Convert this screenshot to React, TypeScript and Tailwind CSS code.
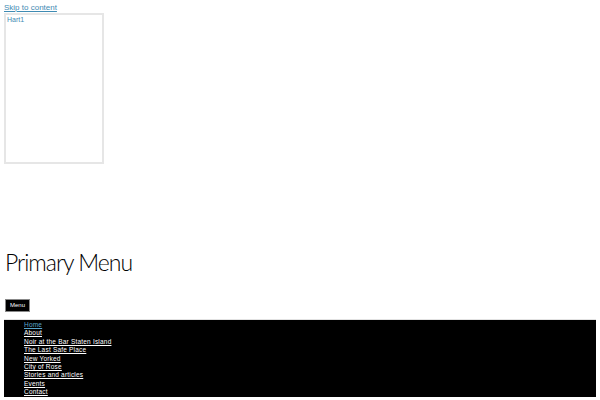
const items = [
  'Home',
  'About',
  'Noir at the Bar Staten Island',
  'The Last Safe Place',
  'New Yorked',
  'City of Rose',
  'Stories and articles',
  'Events',
  'Contact',
];

export default function App() {
  return (
    <div className="min-h-[400px] bg-white font-['Liberation_Sans',sans-serif] text-black">
      <div className="px-1 pt-[3px]">
        <a href="#content" className="block text-[8px] leading-[10px] text-[#3f8bb3] underline">
          Skip to content
        </a>
        <div className="h-[151px] w-[100px] border-2 border-[#e6e6e6] px-[1px] text-[7px] leading-[9px] text-[#3f8bb3]">
          Hart1
        </div>
      </div>

      <h2 className="mt-[83px] px-[5px] font-['Lato',sans-serif] text-[23px] font-light leading-[30px] tracking-[-1px]">
        Primary Menu
      </h2>

      <div className="mt-[22px] px-[5px]">
        <button
          type="button"
          className="block h-[13px] w-[25px] border border-[#888] bg-black text-[6px] leading-[11px] text-white"
        >
          Menu
        </button>
      </div>

      <nav className="mx-1 mt-[7px] border-t border-[#e2e2e2] bg-black pb-0 pl-[20px] pt-[1px]">
        <ul>
          {items.map((it, i) => (
            <li key={it} className="text-[6.5px] leading-[8.4px] tracking-[0.2px]">
              <a href="#" className={i === 0 ? 'text-[#5aa6cc] underline' : 'text-white underline'}>
                {it}
              </a>
            </li>
          ))}
        </ul>
      </nav>
    </div>
  );
}
